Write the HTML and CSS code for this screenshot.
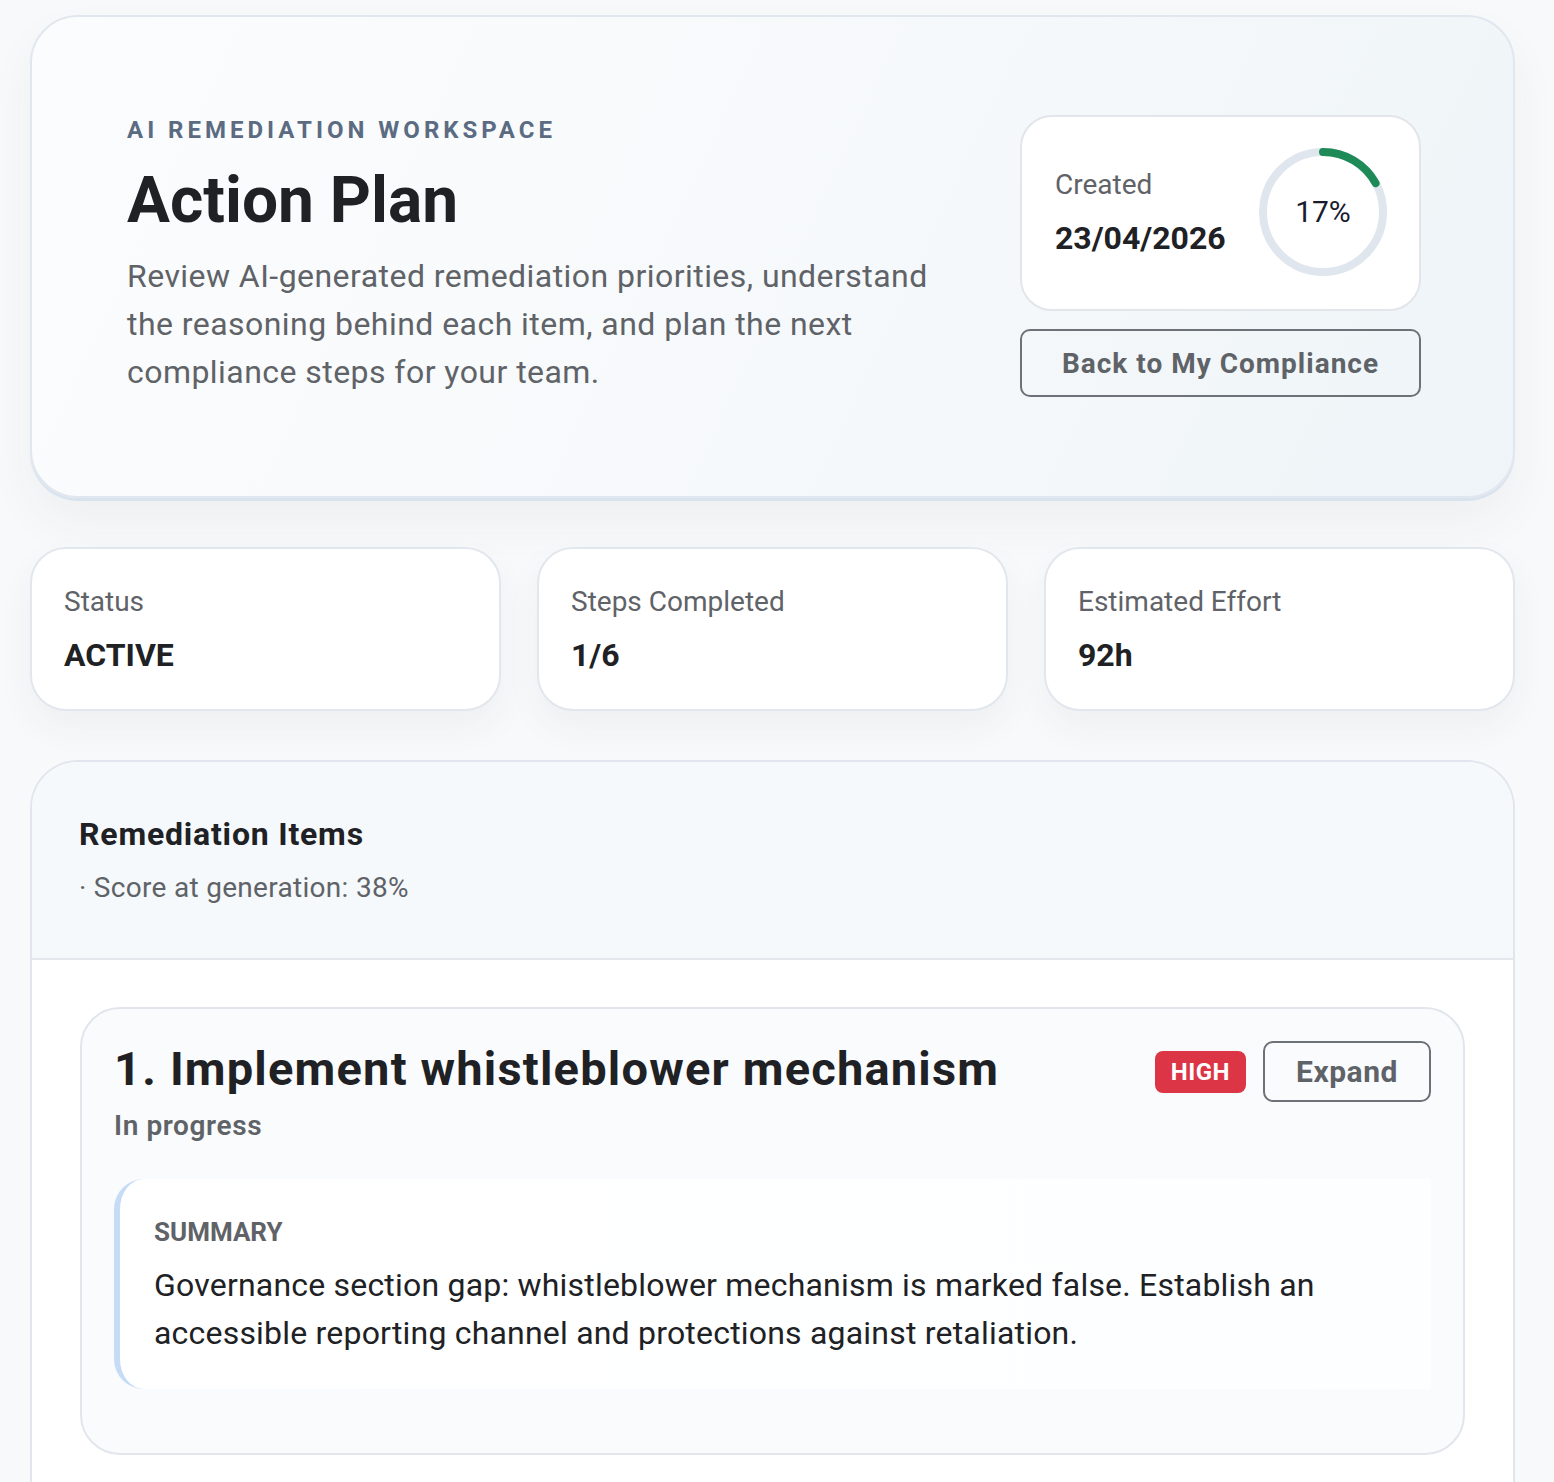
FILE: index.html
```html
<!DOCTYPE html>
<html lang="en">
<head>
    <meta charset="UTF-8">
    <meta name="viewport" content="width=device-width, initial-scale=1.0">
    <title>Action Plan</title>
    <link rel="stylesheet" href="styles.css">
</head>
<body>
    <div class="page">
        <section class="hero">
            <div class="hero-text">
                <div class="eyebrow">AI REMEDIATION WORKSPACE</div>
                <h1>Action Plan</h1>
                <p class="lead">Review AI-generated remediation priorities, understand the reasoning behind each item, and plan the next compliance steps for your team.</p>
            </div>
            <div class="hero-side">
                <div class="meta-card">
                    <div class="meta-info">
                        <div class="meta-label">Created</div>
                        <div class="meta-value">23/04/2026</div>
                    </div>
                    <div class="ring">
                        <svg width="132" height="132" viewBox="0 0 132 132">
                            <circle cx="66" cy="66" r="60" fill="none" stroke="#dfe6ee" stroke-width="8"/>
                            <!-- 17% of the circumference, starting at 12 o'clock -->
                            <circle cx="66" cy="66" r="60" fill="none" stroke="#1e8a57" stroke-width="8"
                                stroke-linecap="round" stroke-dasharray="64 377" transform="rotate(-90 66 66)"/>
                        </svg>
                        <span class="ring-value">17%</span>
                    </div>
                </div>
                <button class="btn-outline btn-wide">Back to My Compliance</button>
            </div>
        </section>

        <section class="stats">
            <div class="stat-card">
                <div class="stat-label">Status</div>
                <div class="stat-value">ACTIVE</div>
            </div>
            <div class="stat-card">
                <div class="stat-label">Steps Completed</div>
                <div class="stat-value">1/6</div>
            </div>
            <div class="stat-card">
                <div class="stat-label">Estimated Effort</div>
                <div class="stat-value">92h</div>
            </div>
        </section>

        <section class="items">
            <div class="items-head">
                <h2>Remediation Items</h2>
                <div class="items-sub">· Score at generation: 38%</div>
            </div>
            <div class="items-body">
                <article class="item">
                    <div class="item-top">
                        <div>
                            <h3>1. Implement whistleblower mechanism</h3>
                            <div class="item-state">In progress</div>
                        </div>
                        <div class="item-actions">
                            <span class="badge-high">HIGH</span>
                            <button class="btn-outline btn-small">Expand</button>
                        </div>
                    </div>
                    <div class="summary">
                        <div class="summary-label">SUMMARY</div>
                        <p>Governance section gap: whistleblower mechanism is marked false. Establish an accessible reporting channel and protections against retaliation.</p>
                    </div>
                </article>
            </div>
        </section>
    </div>
</body>
</html>
```

FILE: styles.css
```css
body {
    margin: 0;
    background: #f8f9fa;
    font-family: Roboto, "Liberation Sans", sans-serif;
    color: #202124;
}
.page {
    padding: 15px 39px 0 30px;
}

/* header card */
.hero {
    display: flex;
    align-items: center;
    justify-content: space-between;
    padding: 98px 92px 99px 95px;
    border: 2px solid #e1e7ef;
    border-radius: 48px;
    background: linear-gradient(115deg, #fbfcfd 0%, #f6f9fb 55%, #eef4f8 100%);
    box-shadow: 0 3px 0 #d9e3ee, 0 24px 48px rgba(60, 64, 67, 0.05);
}
.eyebrow {
    font-size: 24px;
    font-weight: 700;
    letter-spacing: 4px;
    color: #5b6b82;
}
h1 {
    margin: 19px 0 13px;
    font-size: 64px;
    line-height: 76px;
    font-weight: 700;
    color: #1f2124;
}
.lead {
    margin: 0;
    max-width: 830px;
    font-size: 32px;
    line-height: 48px;
    letter-spacing: 0.45px;
    color: #5f6368;
}
.hero-side {
    width: 401px;
    display: flex;
    flex-direction: column;
    gap: 18px;
}
.meta-card {
    display: flex;
    align-items: center;
    justify-content: space-between;
    padding: 29px 30px 31px 33px;
    background: #fff;
    border: 2px solid #e2e5ea;
    border-radius: 32px;
}
.meta-label {
    font-size: 28px;
    color: #5f6368;
}
.meta-value {
    margin-top: 18px;
    font-size: 32px;
    font-weight: 700;
    color: #202124;
}
.ring {
    position: relative;
    width: 132px;
    height: 132px;
}
.ring svg {
    display: block;
}
.ring-value {
    position: absolute;
    inset: 0;
    display: flex;
    align-items: center;
    justify-content: center;
    padding-bottom: 2px;
    font-size: 30px;
    color: #1a1c2e;
}
.btn-outline {
    font-family: inherit;
    background: transparent;
    border: 2px solid #6d7278;
    border-radius: 10px;
    color: #5f6368;
    font-weight: 700;
    cursor: pointer;
}
.btn-wide {
    height: 68px;
    font-size: 28px;
    letter-spacing: 1px;
}

/* summary numbers */
.stats {
    display: grid;
    grid-template-columns: repeat(3, 1fr);
    gap: 36px;
    margin-top: 49px;
}
.stat-card {
    height: 164px;
    box-sizing: border-box;
    padding: 36px 32px 30px;
    background: #fff;
    border: 2px solid #e2e7ee;
    border-radius: 36px;
    box-shadow: 0 16px 36px rgba(60, 64, 67, 0.05);
}
.stat-label {
    font-size: 28px;
    color: #5f6368;
}
.stat-value {
    margin-top: 18px;
    font-size: 32px;
    font-weight: 700;
    color: #202124;
}

/* remediation list */
.items {
    margin-top: 49px;
    border: 2px solid #e1e6ee;
    border-bottom: none;
    border-radius: 48px 48px 0 0;
    background: #fff;
    overflow: hidden;
}
.items-head {
    padding: 52px 47px 54px;
    background: #f5f9fc;
    border-bottom: 2px solid #e4e8ee;
}
h2 {
    margin: 0;
    font-size: 32px;
    line-height: 40px;
    font-weight: 700;
    letter-spacing: 0.8px;
    color: #202124;
}
.items-sub {
    margin-top: 17px;
    font-size: 28px;
    letter-spacing: 0.3px;
    color: #5f6368;
}
.items-body {
    padding: 47px 48px 30px;
}
.item {
    padding: 30px 32px 64px;
    background: #f9fbfd;
    border: 2px solid #e2e6ec;
    border-radius: 40px;
}
.item-top {
    display: flex;
    justify-content: space-between;
    align-items: flex-start;
}
h3 {
    margin: 0;
    font-size: 47px;
    line-height: 60px;
    font-weight: 700;
    letter-spacing: 1.2px;
    color: #1f2124;
}
.item-state {
    margin-top: 10px;
    font-size: 28px;
    font-weight: 600;
    letter-spacing: 0.6px;
    color: #5f6368;
}
.item-actions {
    display: flex;
    align-items: center;
    gap: 17px;
    padding-top: 2px;
}
.badge-high {
    padding: 7px 16px;
    background: #dc3545;
    color: #fff;
    border-radius: 8px;
    font-size: 24px;
    font-weight: 700;
    letter-spacing: 0.5px;
}
.btn-small {
    width: 168px;
    height: 61px;
    font-size: 30px;
    letter-spacing: 0.5px;
}
.summary {
    margin-top: 37px;
    padding: 38px 34px 32px;
    background: linear-gradient(90deg, #ffffff 0%, #fdfeff 100%);
    border-left: 6px solid #c5dbf6;
    border-radius: 30px 0 0 30px;
}
.summary-label {
    font-size: 26px;
    font-weight: 700;
    color: #5f6368;
}
.summary p {
    margin: 14px 0 0;
    font-size: 32px;
    line-height: 48px;
    letter-spacing: 0.2px;
    color: #202124;
}
```
